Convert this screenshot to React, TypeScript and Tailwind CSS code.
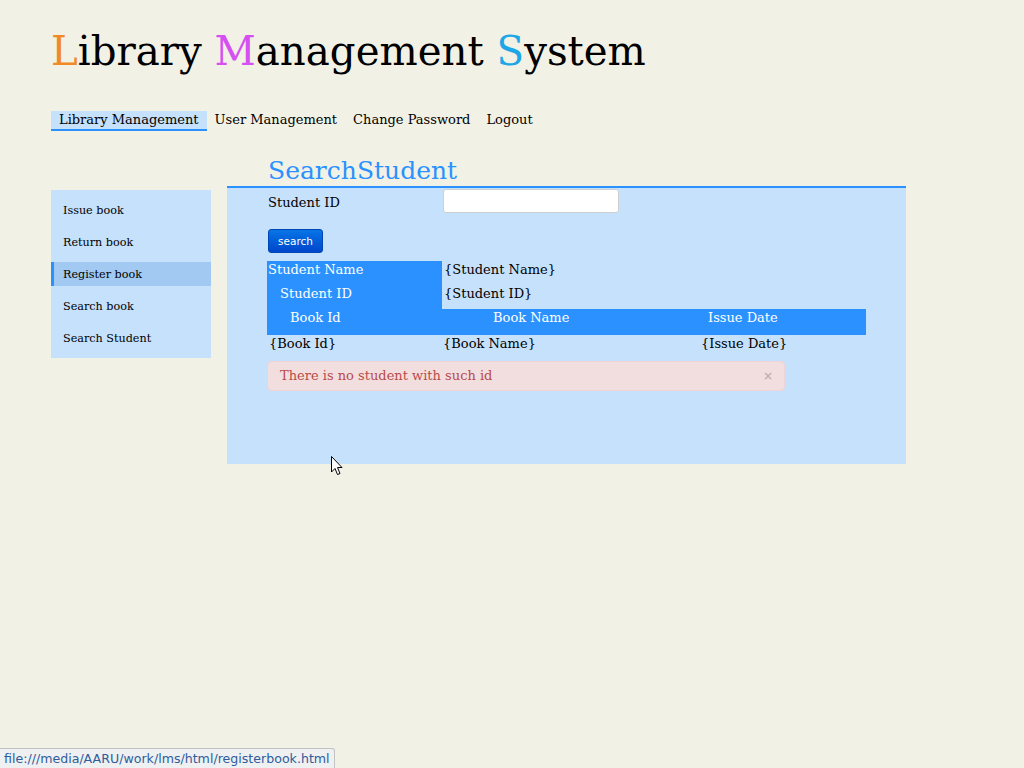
import React from "react";

const sideItems = ["Issue book", "Return book", "Register book", "Search book", "Search Student"];
const navItems = ["Library Management", "User Management", "Change Password", "Logout"];

export default function App() {
  return (
    <div className="relative min-h-[768px] w-full bg-[#f2f1e6] font-['DejaVu_Serif',serif] text-black">
      <div className="pl-[51px] pt-[28px]">
        {/* Title */}
        <h1 className="text-[40.3px] leading-[48px]">
          <span className="text-[#f08a24]">L</span>ibrary <span className="text-[#d64ff0]">M</span>anagement{" "}
          <span className="text-[#1ea7e6]">S</span>ystem
        </h1>

        {/* Top nav */}
        <ul className="mt-[35px] flex text-[13px]">
          {navItems.map((item, i) => (
            <li
              key={item}
              className={
                i === 0
                  ? "h-[20px] border-b-2 border-[#2b91ff] bg-[#c6e1fc] px-[8px] leading-[17px]"
                  : "h-[20px] px-[8px] leading-[17px]"
              }
            >
              {item}
            </li>
          ))}
        </ul>

        <div className="mt-[25px] flex items-start gap-[16px]">
          {/* Sidebar */}
          <ul className="mt-[34px] flex w-[160px] flex-col gap-2 bg-[#c6e1fc] py-2 text-[11.2px]">
            {sideItems.map((item) => (
              <li
                key={item}
                className={
                  item === "Register book"
                    ? "h-6 border-l-[3px] border-[#2b91ff] bg-[#a2c9f1] pl-[9px] leading-[25px]"
                    : "h-6 pl-[12px] leading-[25px]"
                }
              >
                {item}
              </li>
            ))}
          </ul>

          {/* Main */}
          <div className="w-[679px]">
            <h2 className="pl-[41px] text-[25px] leading-[30px] text-[#2b91ff]">SearchStudent</h2>
            <div className="h-[278px] border-t-[2px] border-[#2b91ff] bg-[#c6e1fc] pl-[40px] text-[13px]">
              <div className="mt-[1px] flex h-[24px] items-center">
                <label className="w-[176px] pl-[1px] pt-[2px] leading-[17px]">Student ID</label>
                <input
                  type="text"
                  className="h-[24px] w-[176px] rounded-[3px] border border-[#cfcfcf] bg-white"
                />
              </div>

              <button className="mt-[16px] ml-[1px] h-[24px] w-[55px] rounded-[3px] border border-[#0047b3] bg-gradient-to-b from-[#0a74e6] to-[#0046cc] pt-[1px] font-['DejaVu_Sans',sans-serif] text-[10.5px] text-white">
                search
              </button>

              {/* Result table */}
              <div className="mt-[8px] w-[599px]">
                <div className="flex h-[24px] items-center">
                  <div className="h-full w-[175px] bg-[#2b91ff] pl-[1px] leading-[17px] text-white">Student Name</div>
                  <div className="h-full pl-[2px] leading-[17px]">{"{Student Name}"}</div>
                </div>
                <div className="flex h-[24px] items-center">
                  <div className="h-full w-[175px] bg-[#2b91ff] pl-[13px] leading-[17px] text-white">Student ID</div>
                  <div className="h-full pl-[2px] leading-[17px]">{"{Student ID}"}</div>
                </div>
                <div className="flex h-[26px] bg-[#2b91ff] leading-[18px] text-white">
                  <div className="w-[226px] pl-[23px]">Book Id</div>
                  <div className="w-[215px]">Book Name</div>
                  <div>Issue Date</div>
                </div>
                <div className="flex h-[18px] leading-[18px]">
                  <div className="w-[176px] pl-[2px]">{"{Book Id}"}</div>
                  <div className="w-[258px]">{"{Book Name}"}</div>
                  <div>{"{Issue Date}"}</div>
                </div>
              </div>

              {/* Alert */}
              <div className="mt-[8px] flex h-[30px] w-[518px] items-center justify-between rounded-[4px] border border-[#eed3d7] bg-[#f2dede] pl-[12px] pr-[11px] text-[#b94a48]">
                <span>There is no student with such id</span>
                <span className="font-['DejaVu_Sans',sans-serif] text-[12px] font-bold text-[#c4b2b2]">×</span>
              </div>
            </div>
          </div>
        </div>
      </div>

      {/* Mouse pointer */}
      <svg className="absolute left-[331px] top-[456px]" width="12" height="20" viewBox="0 0 12 20">
        <path d="M0.5 0.5 L0.5 16 L4 12.5 L6.5 18.5 L9 17.5 L6.5 11.5 L11 11.5 Z" fill="white" stroke="black" strokeWidth="1" />
      </svg>

      {/* Browser status bar */}
      <div className="absolute bottom-0 left-0 h-[20px] rounded-tr-[3px] border-t border-r border-[#c3c3c3] bg-[#eef0f2] px-[4px] font-['DejaVu_Sans',sans-serif] text-[12.6px] leading-[19px] text-[#2f5d9b]">
        file:///media/AARU/work/lms/html/registerbook.html
      </div>
    </div>
  );
}
